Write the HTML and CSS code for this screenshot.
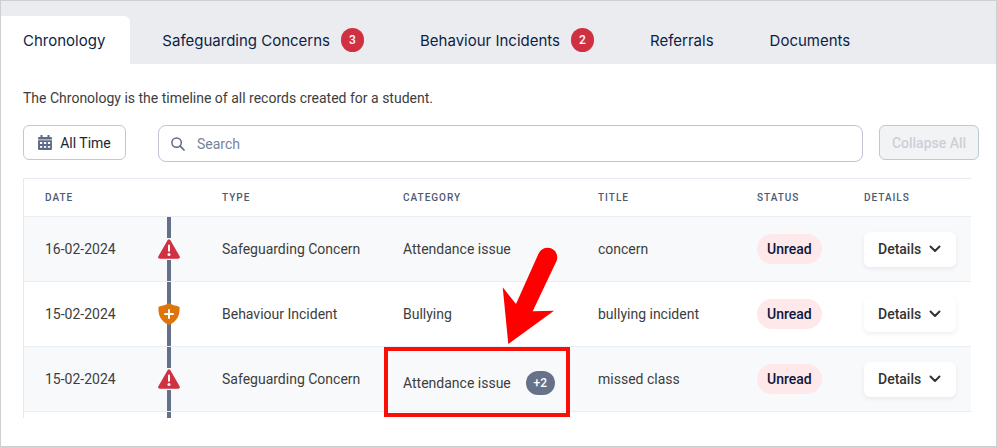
FILE: index.html
```html
<!DOCTYPE html>
<html lang="en">
<head>
<meta charset="utf-8">
<meta name="viewport" content="width=device-width, initial-scale=1">
<title>Student chronology</title>
<link rel="stylesheet" href="styles.css">
</head>
<body>
<svg class="symbols" aria-hidden="true">
  <symbol id="warning" viewBox="0 0 22 20">
    <path fill="#cf3142" d="M9.600 1.200Q11 -.7 12.400 1.200L21.600 17.200Q22.400 19.600 20 19.800H2Q-.4 19.600.4 17.200Z"/>
    <path stroke="#fff" stroke-width="2" stroke-linecap="round" d="M11 6.500v5.200"/>
    <circle cx="11" cy="15.600" r="1.500" fill="#fff"/>
  </symbol>
  <symbol id="shield" viewBox="0 0 22 22">
    <path fill="#dd750c" d="M11 .2Q15.500 2.600 20.800 3.600Q21.600 3.800 21.600 4.800C21.800 12 19.500 18.500 11 22C2.500 18.500.2 12 .4 4.800Q.4 3.800 1.200 3.600Q6.500 2.600 11 .2Z"/>
    <path stroke="#fff" stroke-width="2" stroke-linecap="round" d="M7 11h8M11 7v8"/>
  </symbol>
  <symbol id="chevron" viewBox="0 0 12 8">
    <path fill="none" stroke="#333" stroke-width="2" stroke-linecap="round" stroke-linejoin="round" d="M1.500 1.500 6 6l4.500-4.500"/>
  </symbol>
</svg>
<main class="panel">
  <nav class="tabs" aria-label="Student records">
    <a class="tab tab-active" href="#chronology">Chronology</a>
    <a class="tab" href="#safeguarding">Safeguarding Concerns <span class="badge">3</span></a>
    <a class="tab" href="#behaviour">Behaviour Incidents <span class="badge">2</span></a>
    <a class="tab" href="#referrals">Referrals</a>
    <a class="tab" href="#documents">Documents</a>
  </nav>
  <section class="content" id="chronology">
    <p class="intro">The Chronology is the timeline of all records created for a student.</p>
    <div class="toolbar">
      <button class="button" type="button">
        <svg class="calendar" viewBox="0 0 13 14" aria-hidden="true">
          <path fill="#5f6b85" fill-rule="evenodd" d="M2.300 0h1.900v1.800h4.600V0h1.900v1.800H12q1 0 1 1v1.400H0V2.800q0-1 1-1h1.300ZM0 5h13v8q0 1-1 1H1q-1 0-1-1ZM1.800 6.600v1.800h2.100v-1.800ZM5.500 6.600v1.800h2.100v-1.800ZM9.200 6.600v1.800h2.100v-1.800ZM1.800 10.200v1.800h2.100v-1.800ZM5.500 10.200v1.800h2.100v-1.800ZM9.200 10.200v1.800h2.100v-1.800Z"/>
        </svg>
        All Time
      </button>
      <label class="search">
        <svg class="magnifier" viewBox="0 0 14 14" aria-hidden="true">
          <circle cx="5.600" cy="5.600" r="4.700" fill="none" stroke="#5f6b85" stroke-width="1.500"/>
          <path d="M9.200 9.200 13 13" stroke="#5f6b85" stroke-width="1.700" stroke-linecap="round"/>
        </svg>
        <input class="search-input" type="search" placeholder="Search" aria-label="Search">
      </label>
      <button class="button button-disabled" type="button" disabled>Collapse All</button>
    </div>
    <table class="records">
      <colgroup>
        <col class="col-date"><col class="col-line"><col class="col-type"><col class="col-category"><col class="col-title"><col class="col-status"><col class="col-details">
      </colgroup>
      <thead>
        <tr><th>Date</th><th></th><th>Type</th><th>Category</th><th>Title</th><th>Status</th><th>Details</th></tr>
      </thead>
      <tbody>
        <tr>
          <td>16-02-2024</td>
          <td class="timeline"><svg class="marker marker-warning"><use href="#warning"/></svg></td>
          <td>Safeguarding Concern</td><td>Attendance issue</td><td>concern</td>
          <td><span class="status">Unread</span></td>
          <td><button class="details" type="button">Details <svg class="chevron"><use href="#chevron"/></svg></button></td>
        </tr>
        <tr>
          <td>15-02-2024</td>
          <td class="timeline"><svg class="marker"><use href="#shield"/></svg></td>
          <td>Behaviour Incident</td><td>Bullying</td><td>bullying incident</td>
          <td><span class="status">Unread</span></td>
          <td><button class="details" type="button">Details <svg class="chevron"><use href="#chevron"/></svg></button></td>
        </tr>
        <tr>
          <td>15-02-2024</td>
          <td class="timeline"><svg class="marker marker-warning"><use href="#warning"/></svg></td>
          <td>Safeguarding Concern</td>
          <td class="highlighted">
            <div class="category">Attendance issue <span class="more">+2</span></div>
            <div class="highlight"></div>
            <svg class="arrow" viewBox="0 0 60 98" aria-hidden="true">
              <path fill="#fe0000" d="M7.300 97 1.700 40.300 15 57 37.700 6.300A9.500 9.500 0 0 1 55.300 14.500L31.700 64.300 53 63.700Z"/>
            </svg>
          </td>
          <td>missed class</td>
          <td><span class="status">Unread</span></td>
          <td><button class="details" type="button">Details <svg class="chevron"><use href="#chevron"/></svg></button></td>
        </tr>
        <tr class="continued"><td></td><td class="timeline"></td><td></td><td></td><td></td><td></td><td></td></tr>
      </tbody>
    </table>
  </section>
</main>
</body>
</html>
```

FILE: styles.css
```css
* { box-sizing: border-box; }
body {
  margin: 0;
  font-family: Roboto, "Liberation Sans", sans-serif;
  font-size: 14px;
  color: #3d3d3d;
  background: #fff;
}
button, input { font: inherit; }
.symbols { display: none; }
.panel {
  min-height: 100vh;
  border: 1px solid #cfcfd1;
}
.tabs {
  display: flex;
  gap: 56px;
  padding-top: 15px;
  background: #ebecf0;
}
.tab {
  display: flex;
  align-items: center;
  gap: 11px;
  height: 48px;
  font-family: Inter, sans-serif;
  font-size: 15px;
  color: #0b1f47;
  text-decoration: none;
}
.tab-active {
  margin-right: -24px;
  padding: 0 25px 0 22px;
  border-radius: 0 6px 0 0;
  background: #fff;
}
.badge {
  width: 23px;
  height: 24px;
  border-radius: 12px;
  background: #cf3142;
  color: #fff;
  font: 500 12px/24px Roboto, sans-serif;
  text-align: center;
}
.content { padding: 24px 25px 0 22px; }
.intro { margin: 0; line-height: 20px; }
.toolbar {
  display: flex;
  align-items: flex-start;
  gap: 16px;
  margin: 17px -8px 16px 0;
}
.button {
  display: flex;
  align-items: center;
  justify-content: center;
  gap: 8px;
  width: 103px;
  height: 35px;
  padding: 0;
  border: 1px solid #c2c8d3;
  border-radius: 6px;
  background: #fff;
  color: #1d2433;
}
.button-disabled {
  width: 100px;
  border-color: #b9cbd3;
  background: #f2f3f5;
  color: #cdd0d8;
  font-weight: 500;
}
.calendar { width: 14px; height: 15px; }
.search {
  display: flex;
  flex: 1;
  align-items: center;
  gap: 12px;
  height: 37px;
  margin-left: 16px;
  padding: 0 12px;
  border: 1px solid #bfc4d0;
  border-radius: 8px;
}
.magnifier { width: 14px; height: 14px; }
.search-input {
  flex: 1;
  padding: 0;
  border: 0;
  outline: 0;
  background: none;
}
.search-input::placeholder { color: #77839a; }
.records {
  width: 100%;
  table-layout: fixed;
  border-collapse: separate;
  border-spacing: 0;
  border-left: 1px solid #e6e9ef;
}
.col-date { width: 113px; }
.col-line { width: 64px; }
.col-type { width: 181px; }
.col-category { width: 195px; }
.col-title { width: 159px; }
.col-status { width: 107px; }
.col-details { width: 128px; }
th {
  height: 39px;
  padding: 0 0 0 21px;
  border-top: 1px solid #e8e9f3;
  border-bottom: 1px solid #e9eef4;
  color: #4c5a72;
  font-size: 10px;
  font-weight: 500;
  letter-spacing: 1px;
  text-align: left;
  text-transform: uppercase;
}
td {
  height: 65px;
  padding: 0 0 0 21px;
  border-bottom: 1px solid #e9eef4;
  white-space: nowrap;
}
tbody tr { background: #fff; }
tbody tr:nth-child(odd) { background: #f8f9fb; }
.timeline {
  padding: 0;
  background: linear-gradient(#64708a, #64708a) center / 4px 100% no-repeat padding-box;
  text-align: center;
}
.marker {
  display: block;
  width: 22px;
  height: 22px;
  margin: 0 auto;
}
.marker-warning { padding: 1px 0; background: #f8f9fb; }
.status {
  display: inline-block;
  padding: 0 10px;
  border-radius: 15px;
  background: #fee8e9;
  color: #0b1640;
  font-weight: 500;
  line-height: 30px;
}
.details {
  display: flex;
  align-items: center;
  gap: 8px;
  height: 35px;
  padding: 0 15px 0 14px;
  border: 0;
  border-radius: 6px;
  background: #fff;
  box-shadow: 0 2px 4px rgba(40, 50, 80, 0.08);
  color: #333;
  font-weight: 500;
}
.chevron { width: 12px; height: 8px; }
.highlighted { position: relative; }
.category {
  display: flex;
  align-items: center;
  gap: 15px;
  padding-top: 8px;
}
.more {
  width: 29px;
  border-radius: 12px;
  background: #67728a;
  color: #fff;
  font-size: 12px;
  font-weight: 500;
  line-height: 24px;
  text-align: center;
}
.highlight {
  position: absolute;
  top: 0;
  left: 2px;
  width: 186px;
  height: 70px;
  border: 4px solid #fb0d08;
}
.arrow {
  position: absolute;
  bottom: 66px;
  left: 119px;
  width: 60px;
  height: 98px;
}
.continued td { height: 6px; border: 0; }
tbody .continued { background: #fff; }
```
